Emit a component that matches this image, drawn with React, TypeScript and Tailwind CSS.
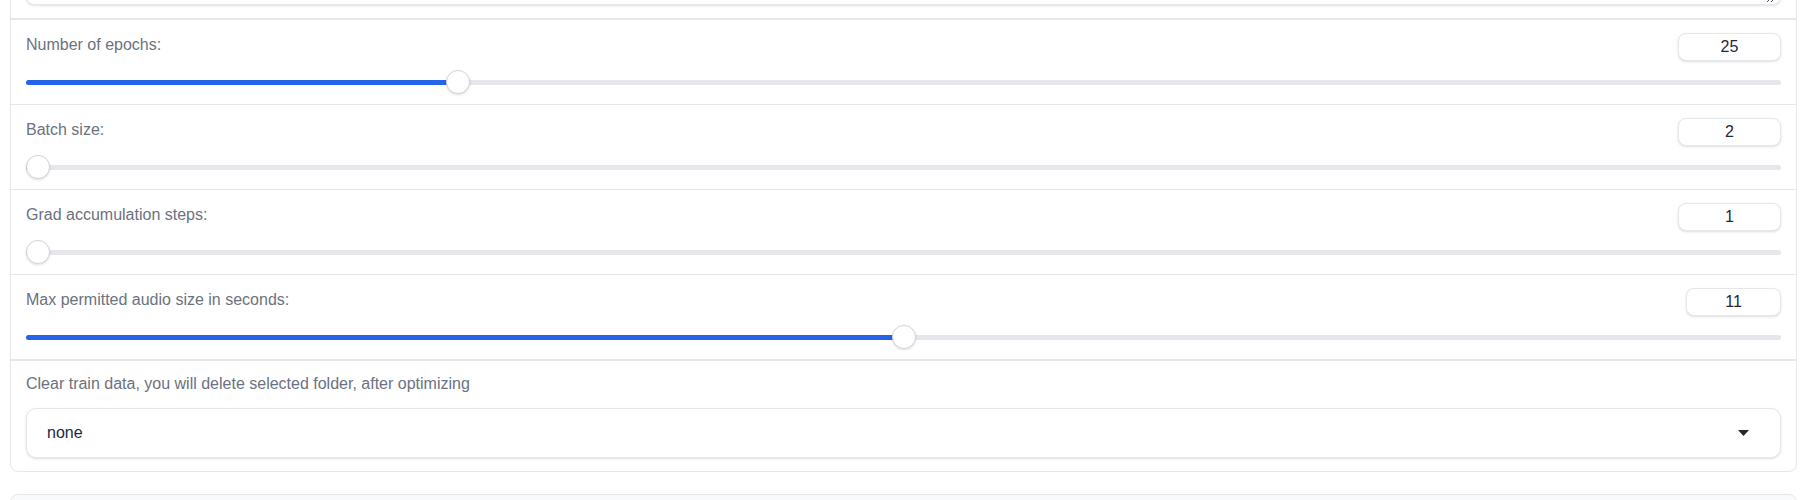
import React from 'react';

type SliderRowProps = {
  label: string;
  value: number;
  min: number;
  max: number;
  boxWidth: string;
};

const SliderRow: React.FC<SliderRowProps> = ({ label, value, min, max, boxWidth }) => {
  const pct = (value - min) / (max - min);
  return (
    <div className="border-b border-gray-200 px-[15px] pt-[13px] pb-[10px]">
      <div className="flex h-[28px] items-center justify-between">
        <span className="text-[16px] leading-[24px] text-[#6b7280] -translate-y-[2px]">{label}</span>
        <div
          className={`flex h-[28px] ${boxWidth} items-center justify-center rounded-lg border border-gray-200 bg-white text-[16px] text-[#1e293b] shadow-sm`}
        >
          {value}
        </div>
      </div>
      <div className="relative mt-[9px] h-[24px]">
        <div className="absolute top-[10px] left-0 right-0 h-[5px] rounded-full bg-gray-200" />
        <div
          className="absolute top-[10px] left-0 h-[5px] rounded-full bg-[#2563eb]"
          style={{ width: `calc(${pct} * (100% - 24px) + 12px)` }}
        />
        <div
          className="absolute top-0 h-[24px] w-[24px] rounded-full border border-gray-300 bg-white shadow-sm"
          style={{ left: `calc(${pct} * (100% - 24px))` }}
        />
      </div>
    </div>
  );
};

export default function App() {
  return (
    <div
      className="min-h-screen bg-white pl-[10px] pr-[13px]"
      style={{ fontFamily: '"Liberation Sans", Arial, sans-serif' }}
    >
      <div className="-mt-[60px] overflow-hidden rounded-lg border border-gray-200 bg-white">
        {/* previous textarea, only its bottom edge is visible */}
        <div className="border-b-2 border-gray-200 px-[15px] pt-[10px] pb-[13px]">
          <div className="relative h-[54px] rounded-lg border border-gray-200 bg-white shadow-sm">
            <svg
              className="absolute right-[4px] bottom-[1px]"
              width="12"
              height="12"
              viewBox="0 0 12 12"
              fill="none"
              stroke="#4b5563"
              strokeWidth="1"
            >
              <line x1="11" y1="3" x2="3" y2="11" />
              <line x1="11" y1="7" x2="7" y2="11" />
            </svg>
          </div>
        </div>

        <SliderRow label="Number of epochs:" value={25} min={1} max={100} boxWidth="w-[103px]" />
        <SliderRow label="Batch size:" value={2} min={2} max={50} boxWidth="w-[103px]" />
        <SliderRow label="Grad accumulation steps:" value={1} min={1} max={100} boxWidth="w-[103px]" />
        <div className="border-b border-gray-200">
          <SliderRow label="Max permitted audio size in seconds:" value={11} min={1} max={21} boxWidth="w-[95px]" />
        </div>

        <div className="px-[15px] pt-[12px] pb-[13px]">
          <div className="text-[16px] leading-[22px] text-[#6b7280]">
            Clear train data, you will delete selected folder, after optimizing
          </div>
          <div className="mt-[13px] flex h-[50px] items-center justify-between rounded-[10px] border border-gray-200 bg-white pl-[20px] pr-[31px] shadow-sm">
            <span className="text-[16px] text-[#1e293b]">none</span>
            <svg width="11" height="6" viewBox="0 0 11 6">
              <path d="M0 0 L11 0 L5.5 6 Z" fill="#1f2937" />
            </svg>
          </div>
        </div>
      </div>

      <div className="mt-[22px] h-[60px] rounded-lg border border-gray-200 bg-gray-50" />
    </div>
  );
}
